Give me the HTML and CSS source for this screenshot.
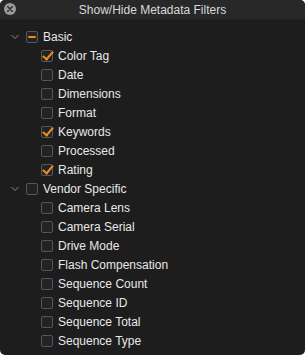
FILE: index.html
```html
<!DOCTYPE html>
<html lang="en">
<head>
  <meta charset="UTF-8">
  <title>Show/Hide Metadata Filters</title>
  <link rel="stylesheet" href="styles.css">
</head>
<body>
  <div class="window">
    <div class="titlebar">
      <span class="close">
        <svg width="12" height="12" viewBox="0 0 12 12"><circle cx="6" cy="6" r="6" fill="#9a9a9a"/><path d="M3.8 3.8 L8.2 8.2 M8.2 3.8 L3.8 8.2" stroke="#2b2b2b" stroke-width="1.6" stroke-linecap="round"/></svg>
      </span>
      <span class="title">Show/Hide Metadata Filters</span>
    </div>

    <div class="tree">
      <div class="row group">
        <svg class="chevron" width="8" height="6" viewBox="0 0 8 6"><path d="M0.5 1 L4 4.5 L7.5 1" fill="none" stroke="#8a8a8a" stroke-width="1"/></svg>
        <span class="box mixed"><span class="dash"></span></span>
        <span class="label">Basic</span>
      </div>
      <div class="row item"><span class="box checked"></span><span class="label">Color Tag</span></div>
      <div class="row item"><span class="box"></span><span class="label">Date</span></div>
      <div class="row item"><span class="box"></span><span class="label">Dimensions</span></div>
      <div class="row item"><span class="box"></span><span class="label">Format</span></div>
      <div class="row item"><span class="box checked"></span><span class="label">Keywords</span></div>
      <div class="row item"><span class="box"></span><span class="label">Processed</span></div>
      <div class="row item"><span class="box checked"></span><span class="label">Rating</span></div>

      <div class="row group">
        <svg class="chevron" width="8" height="6" viewBox="0 0 8 6"><path d="M0.5 1 L4 4.5 L7.5 1" fill="none" stroke="#8a8a8a" stroke-width="1"/></svg>
        <span class="box"></span>
        <span class="label">Vendor Specific</span>
      </div>
      <div class="row item"><span class="box"></span><span class="label">Camera Lens</span></div>
      <div class="row item"><span class="box"></span><span class="label">Camera Serial</span></div>
      <div class="row item"><span class="box"></span><span class="label">Drive Mode</span></div>
      <div class="row item"><span class="box"></span><span class="label">Flash Compensation</span></div>
      <div class="row item"><span class="box"></span><span class="label">Sequence Count</span></div>
      <div class="row item"><span class="box"></span><span class="label">Sequence ID</span></div>
      <div class="row item"><span class="box"></span><span class="label">Sequence Total</span></div>
      <div class="row item"><span class="box"></span><span class="label">Sequence Type</span></div>
    </div>
  </div>
</body>
</html>
```

FILE: styles.css
```css
body {
  margin: 0;
  padding: 0;
  background: #ffffff;
  font-family: 'Liberation Sans', Arial, sans-serif;
}
.window {
  width: 305px;
  height: 355px;
  background: #1d1d1d;
  border-radius: 5px;
  overflow: hidden;
}
.titlebar {
  height: 19px;
  background: #282828;
  border-bottom: 1px solid #222;
  display: flex;
  align-items: center;
  justify-content: center;
  position: relative;
}
.close {
  position: absolute;
  left: 4px;
  top: 3px;
  width: 12px;
  height: 12px;
}
.close svg {
  display: block;
}
.title {
  color: #d8d8d8;
  font-size: 12px;
}
.tree {
  padding-top: 7px;
}
.row {
  height: 19px;
  display: flex;
  align-items: center;
}
.group {
  padding-left: 11px;
}
.chevron {
  margin-right: 7px;
}
.item {
  padding-left: 41px;
}
.box {
  width: 10px;
  height: 10px;
  border: 1px solid #565656;
  border-radius: 2px;
  background: #232323;
  position: relative;
  display: flex;
  align-items: center;
  justify-content: center;
  flex: none;
}
.group .box {
  margin-right: 5px;
}
.item .box {
  margin-right: 5px;
}
.dash {
  width: 8px;
  height: 2px;
  background: #f08a24;
  border-radius: 1px;
}
.checked::after {
  content: "";
  position: absolute;
  left: 3px;
  top: -2px;
  width: 4px;
  height: 9px;
  border-right: 2px solid #f08a24;
  border-bottom: 2px solid #f08a24;
  transform: rotate(40deg);
}
.label {
  color: #e8e8e8;
  font-size: 12px;
  white-space: nowrap;
}
```
